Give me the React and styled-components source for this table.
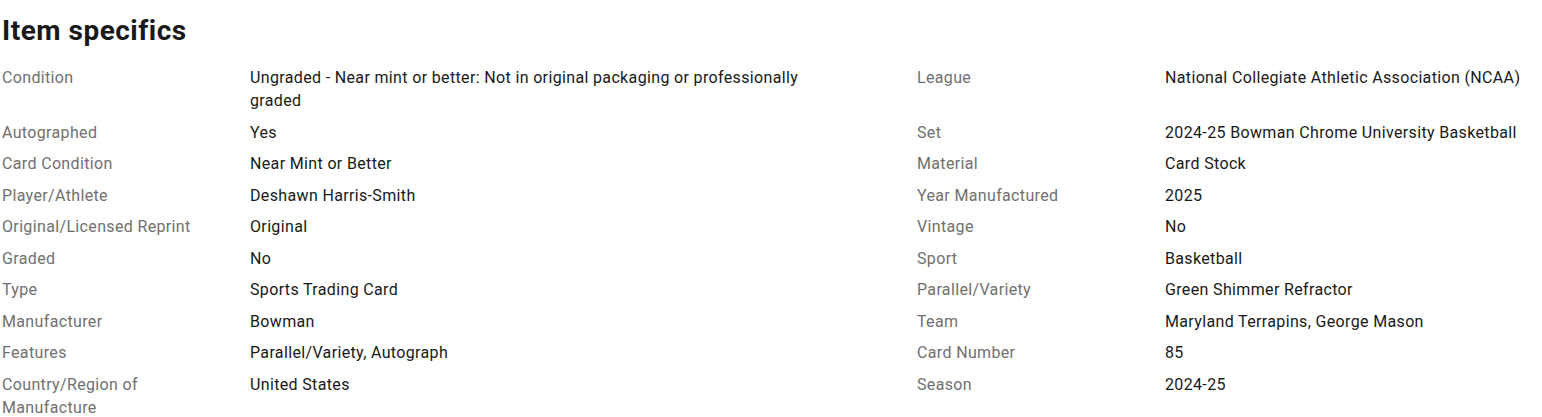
import React from 'react';
import styled, { createGlobalStyle } from 'styled-components';

const GlobalStyle = createGlobalStyle`
  body {
    margin: 0;
    background: #fff;
    font-family: Roboto, "Liberation Sans", Arial, sans-serif;
    color: #191919;
  }
`;

const Section = styled.section`
  padding: 14px 0 0 2px;
  width: 1830px;
`;

const Title = styled.h2`
  margin: 0 0 18px;
  font-size: 28px;
  line-height: 34px;
  font-weight: 700;
  letter-spacing: 0.5px;
  color: #191919;
`;

const Rows = styled.div`
  display: flex;
  flex-direction: column;
  gap: 8.5px;
`;

const Row = styled.div`
  display: grid;
  grid-template-columns: 915px 915px;
`;

const Pair = styled.dl`
  margin: 0;
  display: grid;
  grid-template-columns: 248px 580px;
  align-items: start;
`;

const Label = styled.dt`
  padding-right: 24px;
  font-size: 16px;
  line-height: 23px;
  letter-spacing: 0.35px;
  color: #707070;
`;

const Value = styled.dd`
  margin: 0;
  font-size: 16px;
  line-height: 23px;
  letter-spacing: 0.35px;
  color: #191919;
`;

const rows = [
  [
    ['Condition', 'Ungraded - Near mint or better: Not in original packaging or professionally graded'],
    ['League', 'National Collegiate Athletic Association (NCAA)'],
  ],
  [['Autographed', 'Yes'], ['Set', '2024-25 Bowman Chrome University Basketball']],
  [['Card Condition', 'Near Mint or Better'], ['Material', 'Card Stock']],
  [['Player/Athlete', 'Deshawn Harris-Smith'], ['Year Manufactured', '2025']],
  [['Original/Licensed Reprint', 'Original'], ['Vintage', 'No']],
  [['Graded', 'No'], ['Sport', 'Basketball']],
  [['Type', 'Sports Trading Card'], ['Parallel/Variety', 'Green Shimmer Refractor']],
  [['Manufacturer', 'Bowman'], ['Team', 'Maryland Terrapins, George Mason']],
  [['Features', 'Parallel/Variety, Autograph'], ['Card Number', '85']],
  [['Country/Region of Manufacture', 'United States'], ['Season', '2024-25']],
];

const Spec = ({ label, value }) => (
  <Pair>
    <Label>{label}</Label>
    <Value>{value}</Value>
  </Pair>
);

const App = () => (
  <>
    <GlobalStyle />
    <Section>
      <Title>Item specifics</Title>
      <Rows>
        {rows.map((pairs) => (
          <Row key={pairs[0][0]}>
            {pairs.map(([label, value]) => (
              <Spec key={label} label={label} value={value} />
            ))}
          </Row>
        ))}
      </Rows>
    </Section>
  </>
);

export default App;
